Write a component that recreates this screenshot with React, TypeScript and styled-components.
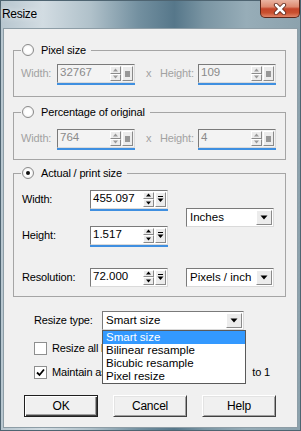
import React from 'react';
import styled, { createGlobalStyle } from 'styled-components';

const GlobalStyle = createGlobalStyle`
  html, body {
    margin: 0;
    padding: 0;
    background: #ffffff;
  }
  body {
    font-family: "Liberation Sans", Arial, sans-serif;
    font-size: 11px;
    color: #000;
  }
`;

const Window = styled.div`
  width: 301px;
  height: 431px;
  box-sizing: border-box;
  display: flex;
  flex-direction: column;
  border: 1px solid #4e6471;
  background: linear-gradient(
    90deg,
    #b7c6cf 0%,
    #d2dce2 14%,
    #b0c1ca 30%,
    #7390a0 46%,
    #56778a 58%,
    #7a95a3 68%,
    #97adb8 82%,
    #8ca2ad 100%
  );
`;

const TitleBar = styled.div`
  height: 27px;
  display: flex;
  justify-content: space-between;
  align-items: flex-start;
`;

const Title = styled.div`
  margin: 6px 0 0 1px;
  font-size: 12px;
  line-height: 14px;
  letter-spacing: -0.3px;
  color: #000;
  text-shadow: 0 0 6px rgba(255, 255, 255, 0.9);
`;

const CloseBtn = styled.div`
  width: 40px;
  height: 18px;
  margin-top: -1px;
  box-sizing: border-box;
  border: 1px solid #5e2719;
  border-top: none;
  border-radius: 0 0 5px 5px;
  background: linear-gradient(
    180deg,
    #eab4a2 0%,
    #dd8a70 40%,
    #c4452a 52%,
    #c9502f 75%,
    #e0866a 100%
  );
  display: flex;
  align-items: center;
  justify-content: center;
`;

const Client = styled.div`
  flex: 1;
  margin: 0 2px 2px;
  background: #f0f0f0;
  border: 1px solid #8d9da6;
  display: flex;
  flex-direction: column;
  align-items: flex-start;
`;

const Group = styled.fieldset<{ $mt: number; $pt: number; $pb: number }>`
  margin: ${p => p.$mt}px 0 0 9px;
  padding: ${p => p.$pt}px 0 ${p => p.$pb}px 0;
  width: 273px;
  box-sizing: border-box;
  border: 1px solid #a5a5a5;
  min-inline-size: auto;
`;

const Legend = styled.legend`
  margin-left: 7px;
  padding: 0 5px 0 1px;
  display: flex;
  align-items: center;
  gap: 7px;
  height: 14px;
  line-height: 14px;
  font-size: 11px;
  letter-spacing: -0.15px;
`;

const Radio = styled.span<{ $on?: boolean }>`
  width: 12px;
  height: 12px;
  box-sizing: border-box;
  border-radius: 50%;
  border: 1px solid #8a8a8a;
  background: radial-gradient(circle at 50% 50%, #ffffff 40%, #e4e4e4 100%);
  display: flex;
  align-items: center;
  justify-content: center;

  &::after {
    content: '';
    display: ${p => (p.$on ? 'block' : 'none')};
    width: 4px;
    height: 4px;
    border-radius: 50%;
    background: #111;
  }
`;

const PixelRow = styled.div`
  display: grid;
  grid-template-columns: 36px 78px 25px 38px 78px;
  align-items: center;
  height: 19px;
  margin-left: 7px;
`;

const Label = styled.span<{ $dim?: boolean; $pl?: number }>`
  font-size: 11px;
  letter-spacing: -0.15px;
  line-height: 13px;
  white-space: nowrap;
  color: ${p => (p.$dim ? '#a2a2a2' : '#000')};
  padding-left: ${p => p.$pl || 0}px;
`;

const Field = styled.div<{ $disabled?: boolean; $underline?: boolean }>`
  display: flex;
  width: 78px;
  height: 19px;
  box-sizing: border-box;
  border: 1px solid;
  border-color: #7a7a7a #dadada #dadada #7a7a7a;
  padding: 1px;
  background: ${p => (p.$disabled ? '#f3f3f3' : '#ffffff')};
  box-shadow: ${p => (p.$underline ? '0 2px 0 #3f8fe0' : 'none')};
`;

const FieldText = styled.span<{ $disabled?: boolean }>`
  flex: 1;
  padding-left: 1px;
  font-size: 11.5px;
  line-height: 13px;
  color: ${p => (p.$disabled ? '#8a8a8a' : '#000')};
`;

const SpinStack = styled.div`
  width: 11px;
  display: flex;
  flex-direction: column;
  margin-right: 1px;
`;

const RaisedBtn = styled.div`
  box-sizing: border-box;
  border: 1px solid;
  border-color: #ffffff #8a8a8a #8a8a8a #ffffff;
  background: #ececec;
  display: flex;
  align-items: center;
  justify-content: center;
`;

const SpinBtn = styled(RaisedBtn)`
  flex: 1;
`;

const PopBtn = styled(RaisedBtn)`
  width: 11px;
`;

const GreySquare = styled.span`
  width: 5px;
  height: 6px;
  background: #979797;
`;

const SizeGrid = styled.div`
  display: grid;
  grid-template-columns: 68px 96px 88px;
  grid-template-rows: 20px 16px 20px 22px 20px;
  margin-left: 8px;
  align-items: center;
`;

const Cell = styled.div<{ $row: string; $col: number }>`
  grid-row: ${p => p.$row};
  grid-column: ${p => p.$col};
  display: flex;
  align-items: center;
`;

const Combo = styled.div<{ $w: number }>`
  display: flex;
  width: ${p => p.$w}px;
  height: 19px;
  box-sizing: border-box;
  border: 1px solid;
  border-color: #7a7a7a #dadada #dadada #7a7a7a;
  padding: 1px;
  background: #ffffff;
`;

const ComboText = styled.span`
  flex: 1;
  padding-left: 2px;
  font-size: 11.5px;
  line-height: 15px;
  white-space: nowrap;
  overflow: hidden;
`;

const ComboBtn = styled(RaisedBtn)`
  width: 16px;
`;

const TypeRow = styled.div`
  display: flex;
  align-items: center;
  margin: 14px 0 0 30px;
  height: 18px;
`;

const TypeLabel = styled(Label)`
  width: 68px;
`;

const ComboWrap = styled.div`
  position: relative;
`;

const DropList = styled.div`
  position: absolute;
  top: 100%;
  left: 0;
  width: 144px;
  box-sizing: border-box;
  border: 1px solid #5a5a5a;
  background: #ffffff;
  z-index: 5;
`;

const DropItem = styled.div<{ $active?: boolean }>`
  height: 13px;
  line-height: 13px;
  padding-left: 3px;
  font-size: 11.5px;
  white-space: nowrap;
  background: ${p => (p.$active ? '#3399ff' : 'transparent')};
  color: ${p => (p.$active ? '#ffffff' : '#000')};
`;

const CheckRow = styled.div<{ $mt: number }>`
  display: flex;
  align-items: center;
  gap: 5px;
  width: 236px;
  height: 13px;
  margin: ${p => p.$mt}px 0 0 30px;
`;

const CheckBox = styled.span`
  width: 13px;
  height: 13px;
  box-sizing: border-box;
  border: 1px solid #8e8f8f;
  background: #ffffff;
  display: flex;
  align-items: center;
  justify-content: center;
  flex-shrink: 0;
`;

const TailText = styled(Label)`
  margin-left: auto;
`;

const ButtonRow = styled.div`
  display: flex;
  justify-content: space-between;
  width: 252px;
  margin: 16px 0 0 20px;
`;

const Button = styled.div<{ $default?: boolean }>`
  width: 74px;
  height: 22px;
  box-sizing: border-box;
  display: flex;
  align-items: center;
  justify-content: center;
  font-size: 12px;
  letter-spacing: -0.2px;
  background: #f0f0f0;
  border: 1px solid;
  border-color: ${p => (p.$default ? '#1f1f1f' : '#ffffff #404040 #404040 #ffffff')};
  box-shadow: ${p =>
    p.$default
      ? 'inset 1px 1px 0 #ffffff, inset -1px -1px 0 #404040, inset -2px -2px 0 #a0a0a0'
      : 'inset 1px 1px 0 #e3e3e3, inset -1px -1px 0 #a0a0a0'};
`;

const UpArrow = ({ dim }: { dim?: boolean }) => (
  <svg width="7" height="4" viewBox="0 0 7 4">
    <polygon points="1,3.5 3.5,0.5 6,3.5" fill={dim ? '#9a9a9a' : '#000'} />
  </svg>
);

const DownArrow = ({ dim }: { dim?: boolean }) => (
  <svg width="7" height="4" viewBox="0 0 7 4">
    <polygon points="1,0.5 6,0.5 3.5,3.5" fill={dim ? '#9a9a9a' : '#000'} />
  </svg>
);

const PopArrow = () => (
  <svg width="7" height="8" viewBox="0 0 7 8">
    <rect x="1" y="1" width="5" height="1" fill="#000" />
    <polygon points="0.5,3.5 6.5,3.5 3.5,7" fill="#000" />
  </svg>
);

const ComboArrow = () => (
  <svg width="8" height="5" viewBox="0 0 8 5">
    <polygon points="0.5,0.5 7.5,0.5 4,4.5" fill="#000" />
  </svg>
);

const CloseGlyph = () => (
  <svg width="16" height="12" viewBox="0 0 16 12">
    <path d="M4 2 L12 10 M12 2 L4 10" stroke="#5a2418" strokeWidth="4.2" strokeLinecap="round" />
    <path d="M4 2 L12 10 M12 2 L4 10" stroke="#ffffff" strokeWidth="2.6" strokeLinecap="round" />
  </svg>
);

const CheckMark = () => (
  <svg width="9" height="9" viewBox="0 0 9 9">
    <polyline points="1,4.5 3.5,7 8,1.5" fill="none" stroke="#000" strokeWidth="1.8" />
  </svg>
);

interface SpinProps {
  value: string;
  disabled?: boolean;
  underline?: boolean;
}

const SpinField = ({ value, disabled, underline }: SpinProps) => (
  <Field $disabled={disabled} $underline={underline}>
    <FieldText $disabled={disabled}>{value}</FieldText>
    <SpinStack>
      <SpinBtn>
        <UpArrow dim={disabled} />
      </SpinBtn>
      <SpinBtn>
        <DownArrow dim={disabled} />
      </SpinBtn>
    </SpinStack>
    <PopBtn>{disabled ? <GreySquare /> : <PopArrow />}</PopBtn>
  </Field>
);

const DropDown = ({ text, width }: { text: string; width: number }) => (
  <Combo $w={width}>
    <ComboText>{text}</ComboText>
    <ComboBtn>
      <ComboArrow />
    </ComboBtn>
  </Combo>
);

export default function App() {
  const RESIZE_TYPES = ['Smart size', 'Bilinear resample', 'Bicubic resample', 'Pixel resize'];

  return (
    <>
      <GlobalStyle />
      <Window>
        <TitleBar>
          <Title>Resize</Title>
          <CloseBtn>
            <CloseGlyph />
          </CloseBtn>
        </TitleBar>
        <Client>
          <Group $mt={14} $pt={7} $pb={13}>
            <Legend>
              <Radio />
              Pixel size
            </Legend>
            <PixelRow>
              <Label $dim>Width:</Label>
              <SpinField value="32767" disabled underline />
              <Label $dim $pl={11}>x</Label>
              <Label $dim>Height:</Label>
              <SpinField value="109" disabled underline />
            </PixelRow>
          </Group>

          <Group $mt={8} $pt={10} $pb={11}>
            <Legend>
              <Radio />
              Percentage of original
            </Legend>
            <PixelRow>
              <Label $dim>Width:</Label>
              <SpinField value="764" disabled underline />
              <Label $dim $pl={11}>x</Label>
              <Label $dim>Height:</Label>
              <SpinField value="4" disabled underline />
            </PixelRow>
          </Group>

          <Group $mt={6} $pt={9} $pb={9}>
            <Legend>
              <Radio $on />
              Actual / print size
            </Legend>
            <SizeGrid>
              <Cell $row="1" $col={1}>
                <Label>Width:</Label>
              </Cell>
              <Cell $row="1" $col={2}>
                <SpinField value="455.097" underline />
              </Cell>
              <Cell $row="1 / 4" $col={3}>
                <DropDown text="Inches" width={88} />
              </Cell>
              <Cell $row="3" $col={1}>
                <Label>Height:</Label>
              </Cell>
              <Cell $row="3" $col={2}>
                <SpinField value="1.517" underline />
              </Cell>
              <Cell $row="5" $col={1}>
                <Label>Resolution:</Label>
              </Cell>
              <Cell $row="5" $col={2}>
                <SpinField value="72.000" />
              </Cell>
              <Cell $row="5" $col={3}>
                <DropDown text="Pixels / inch" width={88} />
              </Cell>
            </SizeGrid>
          </Group>

          <TypeRow>
            <TypeLabel>Resize type:</TypeLabel>
            <ComboWrap>
              <DropDown text="Smart size" width={142} />
              <DropList>
                {RESIZE_TYPES.map((t, i) => (
                  <DropItem key={t} $active={i === 0}>
                    {t}
                  </DropItem>
                ))}
              </DropList>
            </ComboWrap>
          </TypeRow>

          <CheckRow $mt={13}>
            <CheckBox />
            <Label>Resize all layers</Label>
          </CheckRow>

          <CheckRow $mt={11}>
            <CheckBox>
              <CheckMark />
            </CheckBox>
            <Label>Maintain aspect ratio of:</Label>
            <TailText>to 1</TailText>
          </CheckRow>

          <ButtonRow>
            <Button $default>OK</Button>
            <Button>Cancel</Button>
            <Button>Help</Button>
          </ButtonRow>
        </Client>
      </Window>
    </>
  );
}
